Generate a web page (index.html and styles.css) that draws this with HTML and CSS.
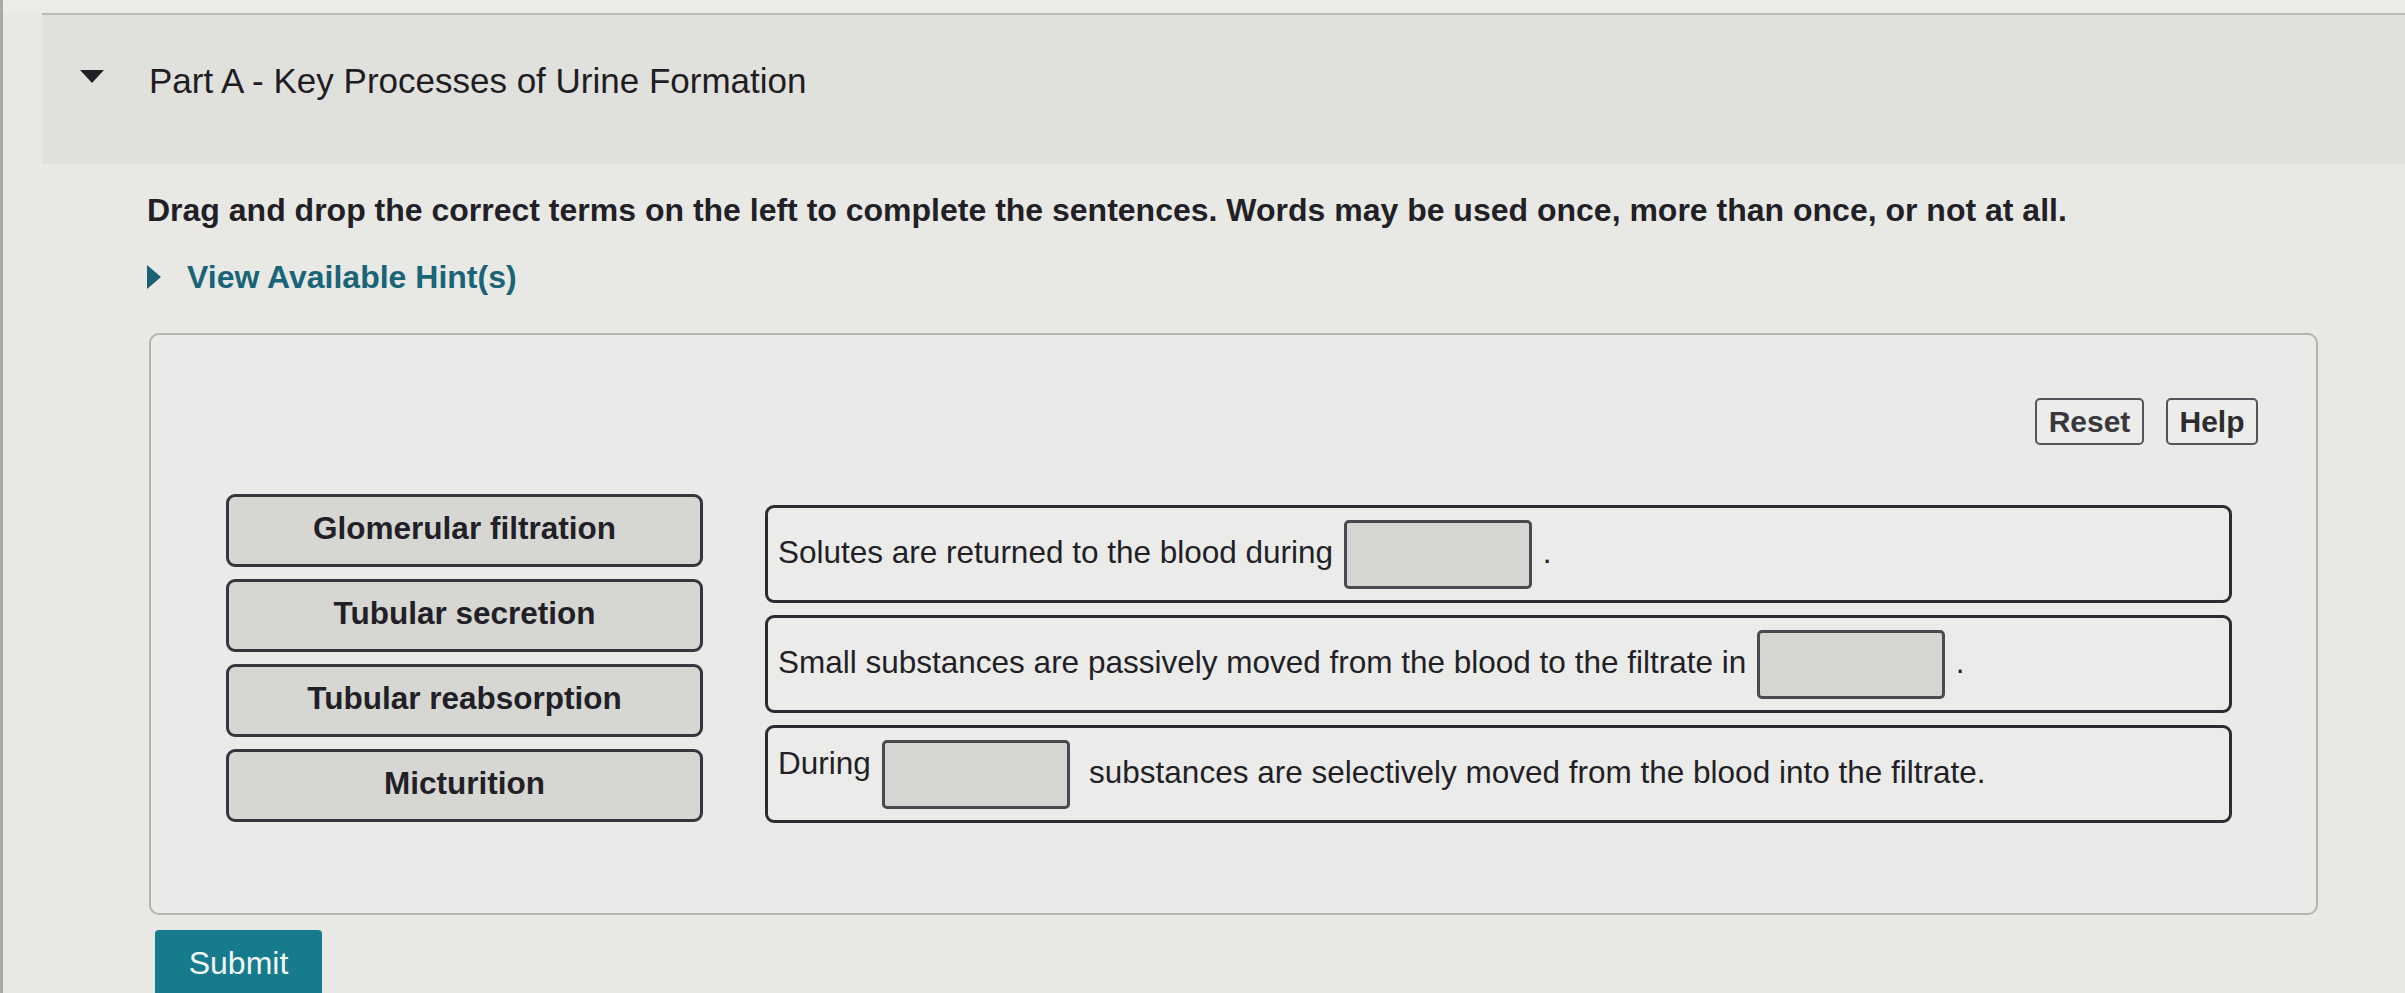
FILE: index.html
```html
<!DOCTYPE html>
<html lang="en">
<head>
<meta charset="utf-8">
<title>Part A - Key Processes of Urine Formation</title>
<link rel="stylesheet" href="styles.css">
</head>
<body>
<div class="page">
  <div class="rule"></div>
  <header class="part-head">
    <span class="caret-down"></span>
    <h1 class="part-title">Part A - Key Processes of Urine Formation</h1>
  </header>
  <main class="content">
    <p class="instr">Drag and drop the correct terms on the left to complete the sentences. Words may be used once, more than once, or not at all.</p>
    <div class="hint"><span class="caret-right"></span><span class="hint-text">View Available Hint(s)</span></div>
    <section class="dnd-box">
      <div class="toolbar">
        <button class="tool-btn reset">Reset</button>
        <button class="tool-btn help">Help</button>
      </div>
      <div class="dnd-body">
        <div class="terms">
          <div class="chip">Glomerular filtration</div>
          <div class="chip">Tubular secretion</div>
          <div class="chip">Tubular reabsorption</div>
          <div class="chip">Micturition</div>
        </div>
        <div class="sentences">
          <div class="sentence"><p class="s-text">Solutes are returned to the blood during <span class="drop"></span> .</p></div>
          <div class="sentence"><p class="s-text">Small substances are passively moved from the blood to the filtrate in <span class="drop"></span> .</p></div>
          <div class="sentence"><p class="s-text"><span class="lead">During</span> <span class="drop"></span> &nbsp;substances are selectively moved from the blood into the filtrate.</p></div>
        </div>
      </div>
    </section>
    <button class="submit">Submit</button>
  </main>
</div>
</body>
</html>
```

FILE: styles.css
```css
* { box-sizing: border-box; }
html, body { margin: 0; padding: 0; }
body {
  background: #e8e8e5;
  font-family: "Liberation Sans", Arial, Helvetica, sans-serif;
  color: #222026;
  overflow: hidden;
  height: 993px;
}
.page {
  border-left: 3px solid #a9a9a7;
  height: 993px;
}
.rule {
  height: 13px;
  background: #ebebe8;
}
.part-head {
  margin-left: 39px;
  border-top: 2px solid #bcbcb9;
  background: #e0e0dd;
  height: 151px;
  display: flex;
  align-items: flex-start;
  padding-top: 46px;
}
.caret-down {
  width: 0;
  height: 0;
  border-left: 12px solid transparent;
  border-right: 12px solid transparent;
  border-top: 13px solid #222026;
  margin-top: 9px;
  margin-left: 38px;
}
.part-title {
  margin: 0 0 0 45px;
  font-size: 35px;
  line-height: 39px;
  font-weight: normal;
  color: #1f1d22;
}
.content {
  padding-left: 144px;
  padding-top: 28px;
}
.instr {
  margin: 0;
  font-size: 32px;
  line-height: 36px;
  font-weight: bold;
  color: #221f27;
}
.hint {
  margin-top: 31px;
  display: flex;
  align-items: center;
  height: 36px;
}
.caret-right {
  width: 0;
  height: 0;
  border-top: 12px solid transparent;
  border-bottom: 12px solid transparent;
  border-left: 14px solid #1b5f72;
  margin-right: 26px;
}
.hint-text {
  font-size: 32px;
  line-height: 36px;
  font-weight: bold;
  color: #1a6478;
}
.dnd-box {
  margin-top: 38px;
  margin-left: 2px;
  width: 2169px;
  border: 2px solid #b3b3b1;
  border-radius: 10px;
  background: #eaeae8;
  padding: 63px 58px 90px 75px;
}
.toolbar {
  display: flex;
  justify-content: flex-end;
  gap: 22px;
}
.tool-btn {
  font-family: inherit;
  font-size: 30px;
  font-weight: bold;
  color: #2e2c31;
  background: #ececea;
  border: 2px solid #56545a;
  border-radius: 5px;
  height: 47px;
  padding: 0 10px;
  line-height: 1;
}
.reset { width: 109px; color: #3a383d; }
.help { width: 92px; }
.dnd-body {
  margin-top: 49px;
  display: flex;
  gap: 62px;
}
.terms {
  display: flex;
  flex-direction: column;
  gap: 12px;
  width: 477px;
}
.chip {
  height: 73px;
  background: #d6d6d3;
  border: 3px solid #39353e;
  border-radius: 9px;
  display: flex;
  align-items: center;
  justify-content: center;
  font-size: 31.5px;
  font-weight: bold;
  color: #221f27;
  padding-bottom: 4px;
}
.sentences {
  margin-top: 11px;
  width: 1467px;
  display: flex;
  flex-direction: column;
  gap: 12px;
}
.sentence {
  height: 98px;
  border: 3px solid #2d2a32;
  border-radius: 9px;
  background: #ebebe9;
  display: flex;
  align-items: center;
  padding-left: 10px;
}
.s-text {
  margin: 0;
  font-size: 31.5px;
  line-height: 36px;
  color: #221f27;
}
.drop {
  display: inline-block;
  width: 188px;
  height: 69px;
  vertical-align: middle;
  background: #d5d5d2;
  border: 3px solid #4b4950;
  border-radius: 5px;
  margin: 0 2px;
}
.lead {
  position: relative;
  top: -8px;
}
.submit {
  margin-top: 15px;
  margin-left: 8px;
  width: 167px;
  height: 68px;
  background: #167b8c;
  color: #f2f6f5;
  border: none;
  border-radius: 4px;
  font-family: inherit;
  font-size: 32px;
  padding: 0 0 2px 0;
}
```
